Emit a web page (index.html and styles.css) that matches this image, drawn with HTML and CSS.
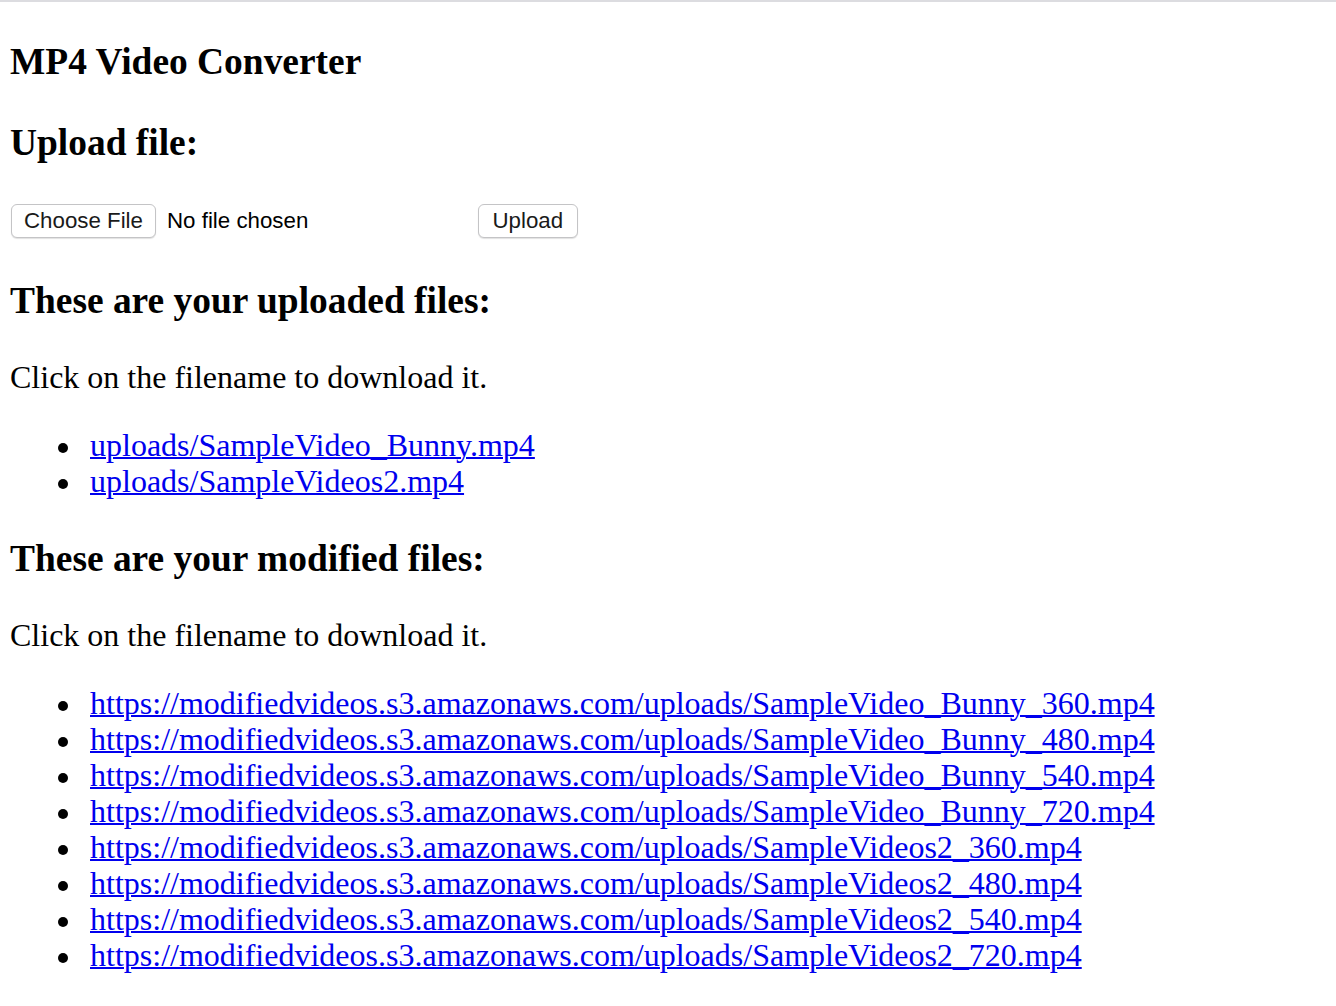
FILE: index.html
```html
<!DOCTYPE html>
<html lang="en">
<head>
<meta charset="utf-8">
<title>MP4 Video Converter</title>
<link rel="stylesheet" href="styles.css">
</head>
<body class="body">
<div class="topline"></div>
<main class="page">
  <h3 class="heading">MP4 Video Converter</h3>
  <h3 class="heading">Upload file:</h3>
  <form class="upload-row">
    <span class="btn choose">Choose File</span>
    <span class="nofile">No file chosen</span>
    <button type="button" class="btn upload">Upload</button>
  </form>
  <h3 class="heading">These are your uploaded files:</h3>
  <p class="text">Click on the filename to download it.</p>
  <ul class="files">
    <li class="item"><a class="link" href="#">uploads/SampleVideo_Bunny.mp4</a></li>
    <li class="item"><a class="link" href="#">uploads/SampleVideos2.mp4</a></li>
  </ul>
  <h3 class="heading">These are your modified files:</h3>
  <p class="text">Click on the filename to download it.</p>
  <ul class="files">
    <li class="item"><a class="link" href="#">https://modifiedvideos.s3.amazonaws.com/uploads/SampleVideo_Bunny_360.mp4</a></li>
    <li class="item"><a class="link" href="#">https://modifiedvideos.s3.amazonaws.com/uploads/SampleVideo_Bunny_480.mp4</a></li>
    <li class="item"><a class="link" href="#">https://modifiedvideos.s3.amazonaws.com/uploads/SampleVideo_Bunny_540.mp4</a></li>
    <li class="item"><a class="link" href="#">https://modifiedvideos.s3.amazonaws.com/uploads/SampleVideo_Bunny_720.mp4</a></li>
    <li class="item"><a class="link" href="#">https://modifiedvideos.s3.amazonaws.com/uploads/SampleVideos2_360.mp4</a></li>
    <li class="item"><a class="link" href="#">https://modifiedvideos.s3.amazonaws.com/uploads/SampleVideos2_480.mp4</a></li>
    <li class="item"><a class="link" href="#">https://modifiedvideos.s3.amazonaws.com/uploads/SampleVideos2_540.mp4</a></li>
    <li class="item"><a class="link" href="#">https://modifiedvideos.s3.amazonaws.com/uploads/SampleVideos2_720.mp4</a></li>
  </ul>
</main>
</body>
</html>
```
FILE: styles.css
```css
.body {
  margin: 0;
  background: #ffffff;
  color: #000000;
  font-family: "Liberation Serif", "Times New Roman", serif;
  font-size: 32px;
}

.topline {
  height: 2px;
  background: #dcdce0;
}

.page {
  padding: 1px 10px 0 10px;
}

.heading {
  font-size: 37.44px;
  font-weight: bold;
  margin: 37.44px 0;
  line-height: normal;
}

.text {
  margin: 32px 0;
  line-height: 36px;
}

.files {
  margin: 32px 0;
  padding-left: 80px;
  list-style: none;
}

.item {
  position: relative;
  line-height: 36px;
}

.item::before {
  content: "";
  position: absolute;
  left: -32px;
  top: 15.5px;
  width: 10px;
  height: 10px;
  border-radius: 50%;
  background: #000000;
}

.link {
  color: #0000ee;
  text-decoration: underline;
  text-decoration-thickness: 2px;
}

.upload-row {
  display: flex;
  align-items: center;
  height: 40px;
  padding: 3px 0 3.5px 1px;
  box-sizing: border-box;
  font-family: "Liberation Sans", Arial, sans-serif;
  font-size: 22.3px;
}

.btn {
  display: inline-flex;
  align-items: center;
  box-sizing: border-box;
  height: 33.5px;
  padding: 0 12px;
  background: #ffffff;
  border: 1px solid #c4c4c6;
  border-radius: 6px;
  box-shadow: 0 1px 1px rgba(0, 0, 0, 0.12);
  color: #1a1a1a;
  font-family: "Liberation Sans", Arial, sans-serif;
  font-size: 22.3px;
}

.upload {
  padding: 0 13.5px;
}

.nofile {
  margin-left: 11px;
  width: 311px;
  color: #000000;
}
```
